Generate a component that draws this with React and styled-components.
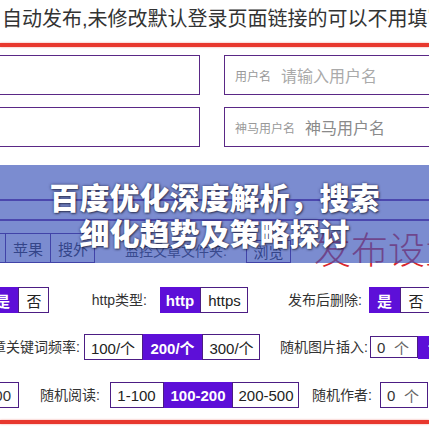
import React from 'react';
import styled, { createGlobalStyle } from 'styled-components';

const GlobalStyle = createGlobalStyle`
  html, body {
    margin: 0;
    padding: 0;
    background: #fff;
  }
  body {
    font-family: "Liberation Sans", "Noto Sans CJK SC", sans-serif;
  }
`;

const Page = styled.div`
  position: relative;
  width: 429px;
  height: 429px;
  overflow: hidden;
  background: #fff;
  color: #333;
`;

const Notice = styled.div`
  height: 43px;
  padding-left: 2px;
  line-height: 38px;
  font-size: 20px;
  color: #333;
  white-space: nowrap;
`;

const RedRule = styled.div`
  height: 4px;
  margin-top: ${p => p.$top || 0}px;
  background: #e8382e;
  box-shadow: 0 0 2px rgba(232, 56, 46, 0.6);
`;

const AccountGrid = styled.div`
  display: grid;
  grid-template-columns: 240px 240px;
  column-gap: 24px;
  row-gap: 12px;
  margin: 8px 0 0 -40px;
`;

const Field = styled.div`
  display: flex;
  align-items: center;
  gap: 10px;
  height: 40px;
  box-sizing: border-box;
  padding-left: 10px;
  border: 1px solid #5a2886;
  white-space: nowrap;
`;

const FieldTag = styled.span`
  font-size: 12px;
  color: #999;
`;

const FieldValue = styled.span`
  font-size: 16px;
  color: ${p => (p.$placeholder ? '#aaa' : '#8a8a8a')};
`;

const WideField = styled.div`
  height: 22px;
  margin-top: 52px;
  box-sizing: border-box;
  border-top: 2px solid #6a2a96;
  border-bottom: 2px solid #6a2a96;
`;

const ToolRow = styled.div`
  display: flex;
  align-items: flex-end;
  height: 30px;
  margin: 12px 0 0 -35px;
  white-space: nowrap;
`;

const OptionRow = styled.div`
  display: flex;
  align-items: center;
  height: 26px;
  margin: ${p => p.$top}px 0 0 ${p => p.$left}px;
  white-space: nowrap;
`;

const Group = styled.div`
  display: flex;
  flex: none;
  height: ${p => p.$h || 26}px;
  background: #fff;
  box-shadow: inset 0 0 0 1px #4c1d84;
`;

const Btn = styled.div`
  display: flex;
  align-items: center;
  justify-content: center;
  width: ${p => p.$w}px;
  box-sizing: border-box;
  font-size: 15px;
  font-weight: ${p => (p.$active ? 700 : 400)};
  color: ${p => (p.$active ? '#fff' : '#222')};
  background: ${p => (p.$active ? '#5d0fd8' : 'transparent')};

  & + & {
    border-left: 1px solid #4c1d84;
  }
`;

const Label = styled.div`
  flex: none;
  width: ${p => p.$w}px;
  box-sizing: border-box;
  padding-right: ${p => p.$pr || 0}px;
  text-align: right;
  font-size: 14px;
  line-height: 23px;
  color: #333;
`;

const NumInput = styled.div`
  display: flex;
  align-items: center;
  justify-content: space-between;
  flex: none;
  width: ${p => p.$w}px;
  height: ${p => p.$h || 22}px;
  box-sizing: border-box;
  padding: 0 8px 0 6px;
  border: 1px solid #4c1d84;
  font-size: 15px;
  color: #333;

  span {
    color: #666;
  }
`;

const Heading = styled.div`
  align-self: flex-start;
  margin: -3px 0 0 23px;
  font-family: "Noto Sans CJK SC", sans-serif;
  font-size: 37px;
  line-height: 37px;
  font-weight: 300;
  color: #d8262c;
`;

const Banner = styled.div`
  position: absolute;
  left: 0;
  right: 0;
  top: 165px;
  height: 98px;
  display: flex;
  align-items: center;
  justify-content: center;
  background: rgba(60, 85, 185, 0.68);
`;

const BannerTitle = styled.h1`
  margin: 0;
  max-width: 336px;
  text-align: center;
  font-family: "Noto Sans CJK SC", sans-serif;
  font-size: 30px;
  line-height: 36px;
  font-weight: 900;
  color: #fff;
  text-shadow: 0 0 3px rgba(20, 20, 60, 0.7), 1px 1px 2px rgba(0, 0, 0, 0.5);
`;

export default function App() {
  return (
    <>
      <GlobalStyle />
      <Page>
        <Notice>自动发布,未修改默认登录页面链接的可以不用填写</Notice>
        <RedRule />

        <AccountGrid>
          <Field />
          <Field>
            <FieldTag>用户名</FieldTag>
            <FieldValue $placeholder>请输入用户名</FieldValue>
          </Field>
          <Field />
          <Field>
            <FieldTag>神马用户名</FieldTag>
            <FieldValue>神马用户名</FieldValue>
          </Field>
        </AccountGrid>

        <WideField />

        <ToolRow>
          <Group $h={30}>
            <Btn $w={40}>安卓</Btn>
            <Btn $w={45}>苹果</Btn>
            <Btn $w={45}>搜外</Btn>
          </Group>
          <Label $w={151} $pr={19}>监控文章文件夹:</Label>
          <Group $h={23}>
            <Btn $w={45}>浏览</Btn>
          </Group>
          <Heading>发布设置</Heading>
        </ToolRow>

        <OptionRow $top={24} $left={-13}>
          <Group>
            <Btn $w={31} $active>是</Btn>
            <Btn $w={31}>否</Btn>
          </Group>
          <Label $w={111} $pr={13}>http类型:</Label>
          <Group>
            <Btn $w={40} $active>http</Btn>
            <Btn $w={48}>https</Btn>
          </Group>
          <Label $w={121} $pr={7}>发布后删除:</Label>
          <Group>
            <Btn $w={31} $active>是</Btn>
            <Btn $w={31}>否</Btn>
          </Group>
        </OptionRow>

        <OptionRow $top={21} $left={-40}>
          <Label $w={124} $pr={4}>文章关键词频率:</Label>
          <Group>
            <Btn $w={58}>100/个</Btn>
            <Btn $w={60} $active>200/个</Btn>
            <Btn $w={58}>300/个</Btn>
          </Group>
          <Label $w={110} $pr={2}>随机图片插入:</Label>
          <NumInput $w={48}>0<span>个</span></NumInput>
          <Group $h={23}>
            <Btn $w={50} $active>设置</Btn>
          </Group>
        </OptionRow>

        <OptionRow $top={22} $left={-21}>
          <NumInput $w={40} $h={26}>100</NumInput>
          <Label $w={91} $pr={10}>随机阅读:</Label>
          <Group>
            <Btn $w={53}>1-100</Btn>
            <Btn $w={69} $active>100-200</Btn>
            <Btn $w={67}>200-500</Btn>
          </Group>
          <Label $w={81} $pr={8}>随机作者:</Label>
          <NumInput $w={48} $h={26}>0<span>个</span></NumInput>
        </OptionRow>

        <RedRule $top={12} />

        <Banner>
          <BannerTitle>百度优化深度解析，搜索细化趋势及策略探讨</BannerTitle>
        </Banner>
      </Page>
    </>
  );
}
